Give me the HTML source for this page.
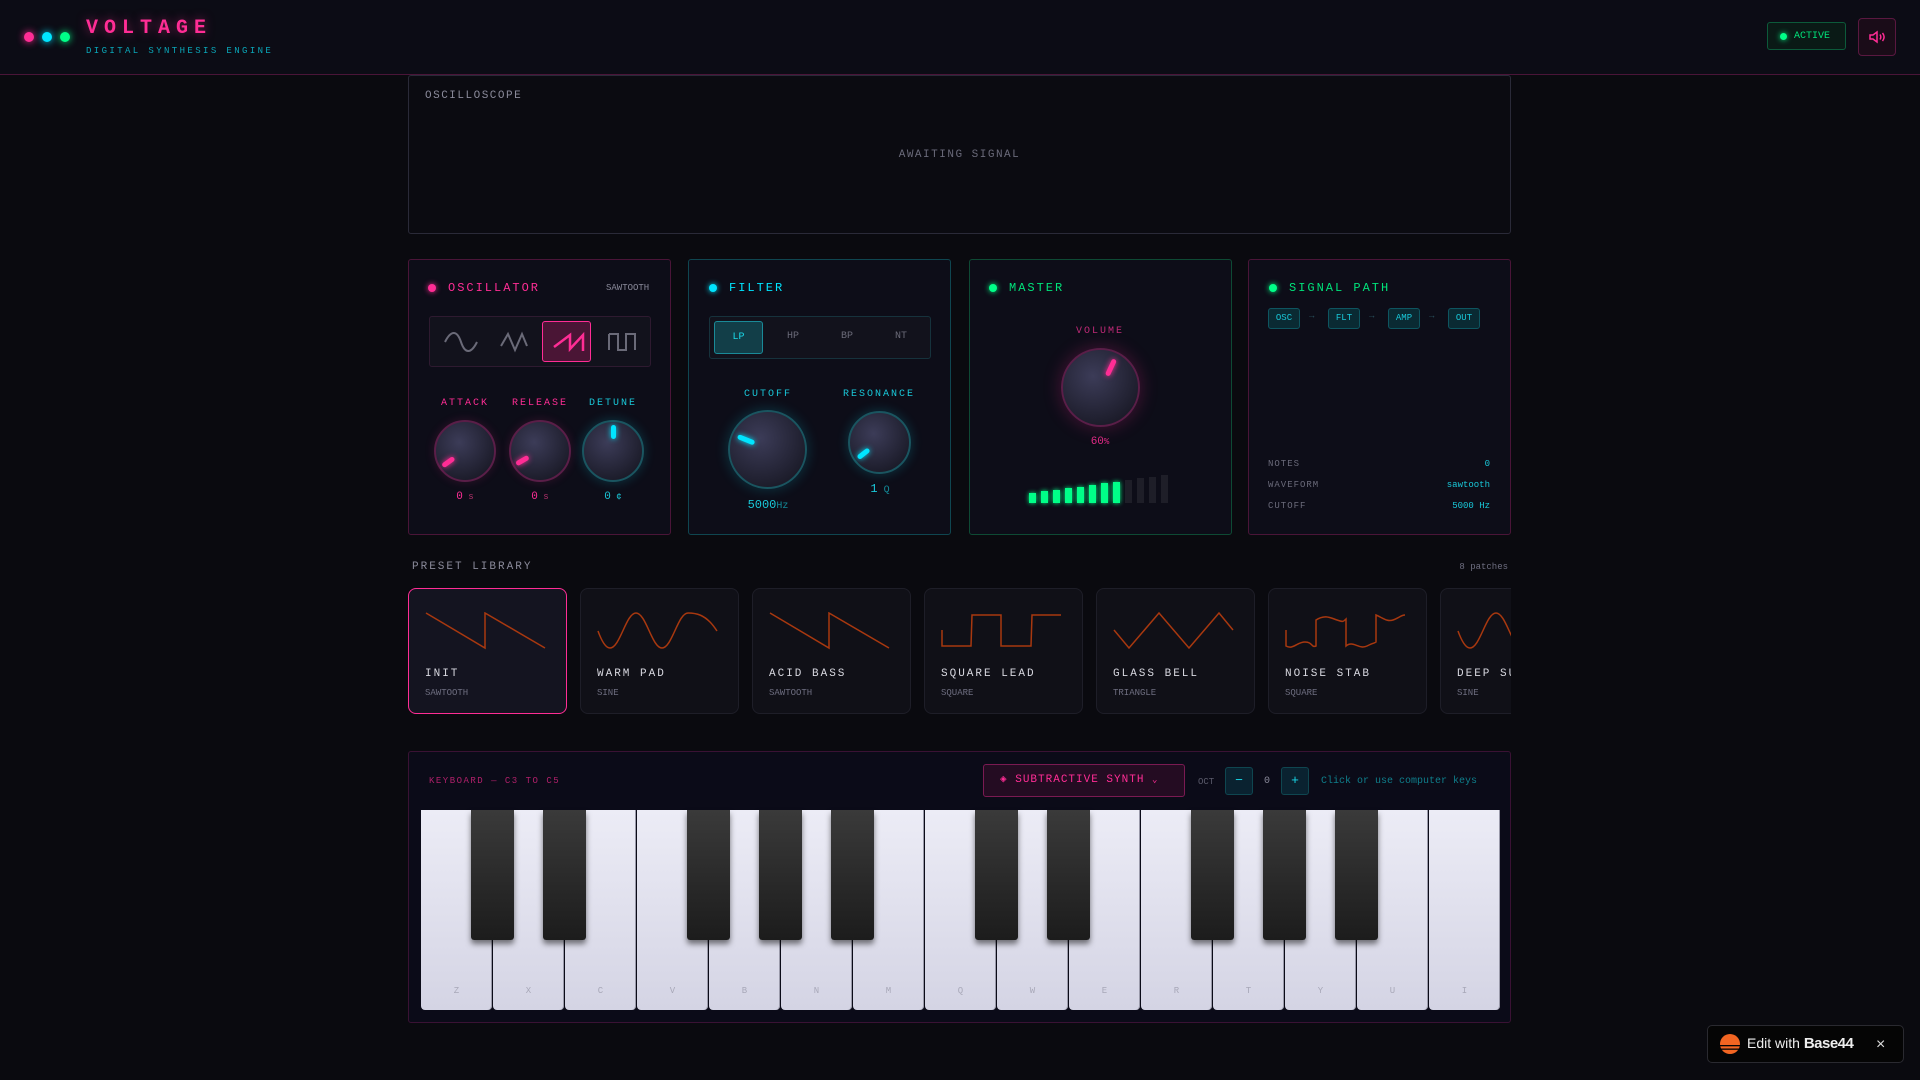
<!DOCTYPE html>
<html><head><meta charset="utf-8"><style>
*{box-sizing:border-box;margin:0;padding:0}
body{width:1920px;height:1080px;overflow:hidden;background:#0a0a0f;font-family:"Liberation Mono","DejaVu Sans Mono",monospace;color:#8a8a9a;position:relative}
.a{position:absolute}
.hdr{left:0;top:0;width:1920px;height:75px;background:#0c0c15;border-bottom:1px solid #4a1538}
.dot{width:10px;height:10px;border-radius:50%}
.panel{top:259px;width:263px;height:276px;background:#0d0d18;border:1px solid;border-radius:3px}
.pt{font-size:12px;letter-spacing:2px}
.knob{border-radius:50%;background:radial-gradient(circle at 40% 35%,#3c3c58,#1c1c2a 75%)}
.rot{position:absolute;inset:0}
.ind{position:absolute;left:calc(50% - 2px);width:5px;border-radius:3px}
.lbl{font-size:10px;letter-spacing:2px;text-align:center}
.card{top:588px;width:159px;height:126px;border-radius:8px;background:#101017;border:1px solid #1e1e28;overflow:hidden}
.cn{position:absolute;left:16px;top:79px;font-size:11px;letter-spacing:2px;color:#d8d8e0}
.ct{position:absolute;left:16px;top:99px;font-size:9px;color:#6e6e80}
.wk{top:810px;width:71px;height:200px;background:linear-gradient(#ececf6,#d4d4e4);border-radius:0 0 4px 4px;box-shadow:inset -1px 0 0 #9a9aaa}
.wk span{position:absolute;bottom:14px;width:100%;text-align:center;font-size:9px;color:#a8a8b8}
.bk{top:810px;width:43px;height:130px;background:linear-gradient(#3a3a3a,#1c1c1c);border-radius:0 0 3px 3px;box-shadow:0 4px 6px rgba(0,0,0,.5)}
.chip{top:308px;width:32px;height:21px;border:1px solid #0e5560;border-radius:3px;background:#0a2a33;color:#19c7d8;font-size:9px;text-align:center;line-height:19px}
.arr{top:311px;color:#2a5560;font-size:9px}
.st{font-size:9px;letter-spacing:1px;color:#6a6a7a}
.sv{font-size:9px;color:#19c7d8;text-align:right}
</style></head><body>
<div class="a hdr"></div>
<div class="a dot" style="left:24px;top:32px;background:#ff2d95;box-shadow:0 0 8px #ff2d95"></div>
<div class="a dot" style="left:42px;top:32px;background:#00e5ff;box-shadow:0 0 8px #00e5ff"></div>
<div class="a dot" style="left:60px;top:32px;background:#00ff88;box-shadow:0 0 8px #00ff88"></div>
<div class="a" style="left:86px;top:17px;font-size:20px;font-weight:bold;letter-spacing:6px;color:#ff2d95;text-shadow:0 0 10px rgba(255,45,149,.5)">VOLTAGE</div>
<div class="a" style="left:86px;top:46px;font-size:9px;letter-spacing:2.4px;color:#0aa6b8">DIGITAL SYNTHESIS ENGINE</div>
<div class="a" style="left:1767px;top:22px;width:79px;height:28px;border:1px solid #0c5a3a;border-radius:3px;background:#0a1a16;color:#00e27a;font-size:10px;display:flex;align-items:center;padding-left:26px">ACTIVE</div>
<div class="a dot" style="left:1780px;top:33px;width:7px;height:7px;background:#00ff88;box-shadow:0 0 6px #00ff88"></div>
<div class="a" style="left:1858px;top:18px;width:38px;height:38px;border:1px solid #5a1840;border-radius:4px;background:#1a0c18"></div>
<svg class="a" style="left:1868px;top:28px" width="18" height="18" viewBox="0 0 18 18" fill="none" stroke="#ff2d95" stroke-width="1.5"><path d="M2 7h3l4-3v10l-4-3H2z"/><path d="M12 6.5c1 1.5 1 3.5 0 5M14.5 5c2 2.5 2 5.5 0 8"/></svg>

<div class="a" style="left:408px;top:75px;width:1103px;height:159px;border:1px solid #2a2a38;border-radius:3px;background:#0b0b11"></div>
<div class="a" style="left:425px;top:90px;font-size:11px;letter-spacing:1.5px;color:#8a8a9a">OSCILLOSCOPE</div>
<div class="a" style="left:408px;top:149px;width:1103px;text-align:center;font-size:11px;letter-spacing:1.5px;color:#6a6a7a">AWAITING SIGNAL</div>

<div class="a panel" style="left:408px;border-color:#4a1538"></div>
<div class="a dot" style="left:428px;top:284px;width:8px;height:8px;background:#ff2d95;box-shadow:0 0 6px #ff2d95"></div>
<div class="a pt" style="left:448px;top:281px;color:#ff2d95">OSCILLATOR</div>
<div class="a" style="left:606px;top:283px;font-size:9px;color:#8a8a9a">SAWTOOTH</div>
<div class="a" style="left:429px;top:316px;width:222px;height:51px;border:1px solid #2e1a30;border-radius:3px;background:#12121c"></div>
<div class="a" style="left:542px;top:321px;width:49px;height:41px;border:1px solid #ff2d95;border-radius:3px;background:#4a1535"></div>
<svg class="a" style="left:429px;top:316px" width="222" height="51" fill="none" stroke-width="2">
<path d="M16 26 C22 14,28 14,32 26 S42 38,48 26" stroke="#6a6a78"/>
<path d="M72 30 L79 18 L86 34 L93 18 L98 30" stroke="#6a6a78"/>
<path d="M125 31 L141 19 L141 33 L154 19 L154 35" stroke="#ff2d95" stroke-width="2.5"/>
<path d="M180 18 L180 34 M180 18 L189 18 L189 34 L197 34 L197 18 L206 18 L206 34" stroke="#6a6a78"/>
</svg>
<div class="a lbl" style="left:435px;top:398px;width:60px;color:#ff2d95">ATTACK</div>
<div class="a lbl" style="left:508px;top:398px;width:64px;color:#ff2d95">RELEASE</div>
<div class="a lbl" style="left:583px;top:398px;width:60px;color:#19c7d8">DETUNE</div>
<div class="a knob" style="left:434px;top:420px;width:62px;height:62px;border:2px solid #5a1e48;box-shadow:0 0 10px rgba(255,45,149,.15)"><div class="rot" style="transform:rotate(-125deg)"><div class="ind" style="top:2px;height:14px;background:#ff2d95;box-shadow:0 0 6px #ff2d95"></div></div></div>
<div class="a knob" style="left:509px;top:420px;width:62px;height:62px;border:2px solid #5a1e48;box-shadow:0 0 10px rgba(255,45,149,.15)"><div class="rot" style="transform:rotate(-120deg)"><div class="ind" style="top:2px;height:14px;background:#ff2d95;box-shadow:0 0 6px #ff2d95"></div></div></div>
<div class="a knob" style="left:582px;top:420px;width:62px;height:62px;border:2px solid #1a5560;box-shadow:0 0 12px rgba(0,229,255,.2)"><div class="rot"><div class="ind" style="top:3px;height:14px;background:#00e5ff;box-shadow:0 0 6px #00e5ff"></div></div></div>
<div class="a" style="left:435px;top:491px;width:60px;text-align:center;font-size:11px;color:#ff2d95">0<span style="font-size:9px;color:#b0306a"> s</span></div>
<div class="a" style="left:510px;top:491px;width:60px;text-align:center;font-size:11px;color:#ff2d95">0<span style="font-size:9px;color:#b0306a"> s</span></div>
<div class="a" style="left:583px;top:491px;width:60px;text-align:center;font-size:11px;color:#19c7d8">0<span style="font-size:9px"> ¢</span></div>

<div class="a panel" style="left:688px;border-color:#0f4650"></div>
<div class="a dot" style="left:709px;top:284px;width:8px;height:8px;background:#00e5ff;box-shadow:0 0 6px #00e5ff"></div>
<div class="a pt" style="left:729px;top:281px;color:#00e5ff">FILTER</div>
<div class="a" style="left:709px;top:316px;width:222px;height:43px;border:1px solid #16323c;border-radius:3px;background:#12121c"></div>
<div class="a" style="left:714px;top:321px;width:49px;height:33px;border:1px solid #1a8a98;border-radius:3px;background:#123e48;color:#19d8e8;font-size:10px;text-align:center;line-height:31px">LP</div>
<div class="a" style="left:775px;top:331px;width:36px;text-align:center;font-size:10px;color:#6a6a78">HP</div>
<div class="a" style="left:829px;top:331px;width:36px;text-align:center;font-size:10px;color:#6a6a78">BP</div>
<div class="a" style="left:883px;top:331px;width:36px;text-align:center;font-size:10px;color:#6a6a78">NT</div>
<div class="a lbl" style="left:728px;top:389px;width:80px;color:#19c7d8">CUTOFF</div>
<div class="a lbl" style="left:834px;top:389px;width:90px;color:#19c7d8">RESONANCE</div>
<div class="a knob" style="left:728px;top:410px;width:79px;height:79px;border:2px solid #1a5560;box-shadow:0 0 14px rgba(0,229,255,.2)"><div class="rot" style="transform:rotate(-68deg)"><div class="ind" style="top:5px;height:18px;background:#00e5ff;box-shadow:0 0 6px #00e5ff"></div></div></div>
<div class="a knob" style="left:848px;top:411px;width:63px;height:63px;border:2px solid #1a5560;box-shadow:0 0 12px rgba(0,229,255,.2)"><div class="rot" style="transform:rotate(-128deg)"><div class="ind" style="top:3px;height:14px;background:#00e5ff;box-shadow:0 0 6px #00e5ff"></div></div></div>
<div class="a" style="left:728px;top:498px;width:80px;text-align:center;font-size:12px;color:#19c7d8">5000<span style="font-size:10px;color:#138a98">Hz</span></div>
<div class="a" style="left:840px;top:482px;width:80px;text-align:center;font-size:12px;color:#19c7d8">1<span style="font-size:10px;color:#138a98"> Q</span></div>

<div class="a panel" style="left:969px;border-color:#0e4a34"></div>
<div class="a dot" style="left:989px;top:284px;width:8px;height:8px;background:#00ff88;box-shadow:0 0 6px #00ff88"></div>
<div class="a pt" style="left:1009px;top:281px;color:#00e27a">MASTER</div>
<div class="a lbl" style="left:1060px;top:326px;width:80px;color:#c02a78">VOLUME</div>
<div class="a knob" style="left:1061px;top:348px;width:79px;height:79px;border:2px solid #5a1e48;box-shadow:0 0 18px rgba(255,45,149,.25)"><div class="rot" style="transform:rotate(25deg)"><div class="ind" style="top:6px;height:18px;background:#ff2d95;box-shadow:0 0 6px #ff2d95"></div></div></div>
<div class="a" style="left:1060px;top:436px;width:80px;text-align:center;font-size:11px;color:#e02a85">60<span style="font-size:9px">%</span></div>
<div class="a" style="left:1029px;top:475px;width:150px;height:28px">
<div class="a" style="left:0;bottom:0;width:7px;height:10px;background:#00ff88;box-shadow:0 0 5px #00ff88"></div>
<div class="a" style="left:12px;bottom:0;width:7px;height:12px;background:#00ff88;box-shadow:0 0 5px #00ff88"></div>
<div class="a" style="left:24px;bottom:0;width:7px;height:13px;background:#00ff88;box-shadow:0 0 5px #00ff88"></div>
<div class="a" style="left:36px;bottom:0;width:7px;height:15px;background:#00ff88;box-shadow:0 0 5px #00ff88"></div>
<div class="a" style="left:48px;bottom:0;width:7px;height:16px;background:#00ff88;box-shadow:0 0 5px #00ff88"></div>
<div class="a" style="left:60px;bottom:0;width:7px;height:18px;background:#00ff88;box-shadow:0 0 5px #00ff88"></div>
<div class="a" style="left:72px;bottom:0;width:7px;height:20px;background:#00ff88;box-shadow:0 0 5px #00ff88"></div>
<div class="a" style="left:84px;bottom:0;width:7px;height:21px;background:#00ff88;box-shadow:0 0 5px #00ff88"></div>
<div class="a" style="left:96px;bottom:0;width:7px;height:23px;background:#1e1e28"></div>
<div class="a" style="left:108px;bottom:0;width:7px;height:25px;background:#1e1e28"></div>
<div class="a" style="left:120px;bottom:0;width:7px;height:26px;background:#1e1e28"></div>
<div class="a" style="left:132px;bottom:0;width:7px;height:28px;background:#1e1e28"></div>
</div>

<div class="a panel" style="left:1248px;border-color:#4a1538"></div>
<div class="a dot" style="left:1269px;top:284px;width:8px;height:8px;background:#00ff88;box-shadow:0 0 6px #00ff88"></div>
<div class="a pt" style="left:1289px;top:281px;color:#00e27a">SIGNAL PATH</div>
<div class="a chip" style="left:1268px">OSC</div><div class="a arr" style="left:1309px">→</div>
<div class="a chip" style="left:1328px">FLT</div><div class="a arr" style="left:1369px">→</div>
<div class="a chip" style="left:1388px">AMP</div><div class="a arr" style="left:1429px">→</div>
<div class="a chip" style="left:1448px">OUT</div>
<div class="a st" style="left:1268px;top:459px">NOTES</div><div class="a sv" style="left:1390px;top:459px;width:100px">0</div>
<div class="a st" style="left:1268px;top:480px">WAVEFORM</div><div class="a sv" style="left:1390px;top:480px;width:100px">sawtooth</div>
<div class="a st" style="left:1268px;top:501px">CUTOFF</div><div class="a sv" style="left:1390px;top:501px;width:100px">5000 Hz</div>

<div class="a" style="left:412px;top:561px;font-size:11px;letter-spacing:2px;color:#8a8a9a">PRESET LIBRARY</div>
<div class="a" style="left:1400px;top:562px;width:108px;text-align:right;font-size:9px;color:#6e6e80">8 patches</div>
<div class="a" style="left:408px;top:586px;width:1103px;height:130px;overflow:hidden">
<div class="a card" style="left:0;top:2px;border-color:#ff2d95;background:#141420"><svg class="a" style="left:16px;top:23px" width="122" height="40" fill="none" stroke="#a8380f" stroke-width="1.5"><path d="M1 1 L60 36 L60 1 L120 36"/></svg><div class="cn">INIT</div><div class="ct">SAWTOOTH</div></div>
<div class="a card" style="left:172px;top:2px"><svg class="a" style="left:16px;top:23px" width="122" height="40" fill="none" stroke="#a8380f" stroke-width="1.5"><path d="M1 19 C5 30,9 36,13 36 C23 36,29 1,39 1 C49 1,55 36,65 36 C75 36,81 1,91 1 C101 1,107 4,113 10 C116 13,118 16,120 19"/></svg><div class="cn">WARM PAD</div><div class="ct">SINE</div></div>
<div class="a card" style="left:344px;top:2px"><svg class="a" style="left:16px;top:23px" width="122" height="40" fill="none" stroke="#a8380f" stroke-width="1.5"><path d="M1 1 L60 36 L60 1 L120 36"/></svg><div class="cn">ACID BASS</div><div class="ct">SAWTOOTH</div></div>
<div class="a card" style="left:516px;top:2px"><svg class="a" style="left:16px;top:23px" width="122" height="40" fill="none" stroke="#a8380f" stroke-width="1.5"><path d="M1 18 L1 34 L30 34 L31 3 L60 3 L60 34 L90 34 L91 3 L120 3"/></svg><div class="cn">SQUARE LEAD</div><div class="ct">SQUARE</div></div>
<div class="a card" style="left:688px;top:2px"><svg class="a" style="left:16px;top:23px" width="122" height="40" fill="none" stroke="#a8380f" stroke-width="1.5"><path d="M1 18 L16 36 L46 1 L76 36 L106 1 L120 18"/></svg><div class="cn">GLASS BELL</div><div class="ct">TRIANGLE</div></div>
<div class="a card" style="left:860px;top:2px"><svg class="a" style="left:16px;top:23px" width="122" height="40" fill="none" stroke="#a8380f" stroke-width="1.5"><path d="M1 18 L1 34 C8 38,12 30,20 30 S26 36,31 34 L31 8 C40 2,46 6,52 8 S58 10,61 7 L61 34 C68 28,74 38,82 34 S88 32,91 30 L91 3 C98 6,102 10,108 8 S116 3,120 3"/></svg><div class="cn">NOISE STAB</div><div class="ct">SQUARE</div></div>
<div class="a card" style="left:1032px;top:2px"><svg class="a" style="left:16px;top:23px" width="122" height="40" fill="none" stroke="#a8380f" stroke-width="1.5"><path d="M1 19 C5 30,9 36,13 36 C23 36,29 1,39 1 C49 1,55 36,65 36"/></svg><div class="cn">DEEP SUB</div><div class="ct">SINE</div></div>
</div>

<div class="a" style="left:408px;top:751px;width:1103px;height:272px;border:1px solid #3a1234;border-radius:3px;background:#0b0b18"></div>
<div class="a" style="left:429px;top:776px;font-size:9px;letter-spacing:1.5px;color:#b0206a">KEYBOARD — C3 TO C5</div>
<div class="a" style="left:983px;top:764px;width:202px;height:33px;border:1px solid #7a1a52;border-radius:3px;background:#240c22;color:#ff2d95;font-size:11px;letter-spacing:1px;line-height:31px;padding-left:16px">◈ SUBTRACTIVE SYNTH <span style="font-size:9px">⌄</span></div>
<div class="a" style="left:1198px;top:777px;font-size:9px;color:#5a5a6a">OCT</div>
<div class="a" style="left:1225px;top:767px;width:28px;height:28px;border:1px solid #0f4650;border-radius:3px;background:#0a2230;color:#19d8e8;text-align:center;line-height:26px;font-size:13px">−</div>
<div class="a" style="left:1261px;top:776px;width:12px;font-size:10px;color:#8a8a9a;text-align:center">0</div>
<div class="a" style="left:1281px;top:767px;width:28px;height:28px;border:1px solid #0f4650;border-radius:3px;background:#0a2230;color:#19d8e8;text-align:center;line-height:26px;font-size:13px">+</div>
<div class="a" style="left:1321px;top:776px;font-size:10px;color:#0f7f8c">Click or use computer keys</div>

<div class="a wk" style="left:421px"><span>Z</span></div>
<div class="a wk" style="left:493px"><span>X</span></div>
<div class="a wk" style="left:565px"><span>C</span></div>
<div class="a wk" style="left:637px"><span>V</span></div>
<div class="a wk" style="left:709px"><span>B</span></div>
<div class="a wk" style="left:781px"><span>N</span></div>
<div class="a wk" style="left:853px"><span>M</span></div>
<div class="a wk" style="left:925px"><span>Q</span></div>
<div class="a wk" style="left:997px"><span>W</span></div>
<div class="a wk" style="left:1069px"><span>E</span></div>
<div class="a wk" style="left:1141px"><span>R</span></div>
<div class="a wk" style="left:1213px"><span>T</span></div>
<div class="a wk" style="left:1285px"><span>Y</span></div>
<div class="a wk" style="left:1357px"><span>U</span></div>
<div class="a wk" style="left:1429px"><span>I</span></div>
<div class="a bk" style="left:471px"></div>
<div class="a bk" style="left:543px"></div>
<div class="a bk" style="left:687px"></div>
<div class="a bk" style="left:759px"></div>
<div class="a bk" style="left:831px"></div>
<div class="a bk" style="left:975px"></div>
<div class="a bk" style="left:1047px"></div>
<div class="a bk" style="left:1191px"></div>
<div class="a bk" style="left:1263px"></div>
<div class="a bk" style="left:1335px"></div>

<div class="a" style="left:1707px;top:1025px;width:197px;height:38px;border:1px solid #2a2a30;border-radius:5px;background:#050505"></div>
<svg class="a" style="left:1720px;top:1034px" width="20" height="20" viewBox="0 0 20 20"><circle cx="10" cy="10" r="10" fill="#f26522"/><rect x="0" y="11" width="20" height="1.3" fill="#050505"/><rect x="0" y="14.5" width="20" height="1.3" fill="#050505"/></svg>
<div class="a" style="left:1747px;top:1035px;font-family:'Liberation Sans',sans-serif;font-size:14px;color:#eee">Edit with <b style="font-size:15px;letter-spacing:-0.5px">Base44</b></div>
<div class="a" style="left:1876px;top:1036px;font-family:'Liberation Sans',sans-serif;font-size:16px;color:#ddd">×</div>
</body></html>
